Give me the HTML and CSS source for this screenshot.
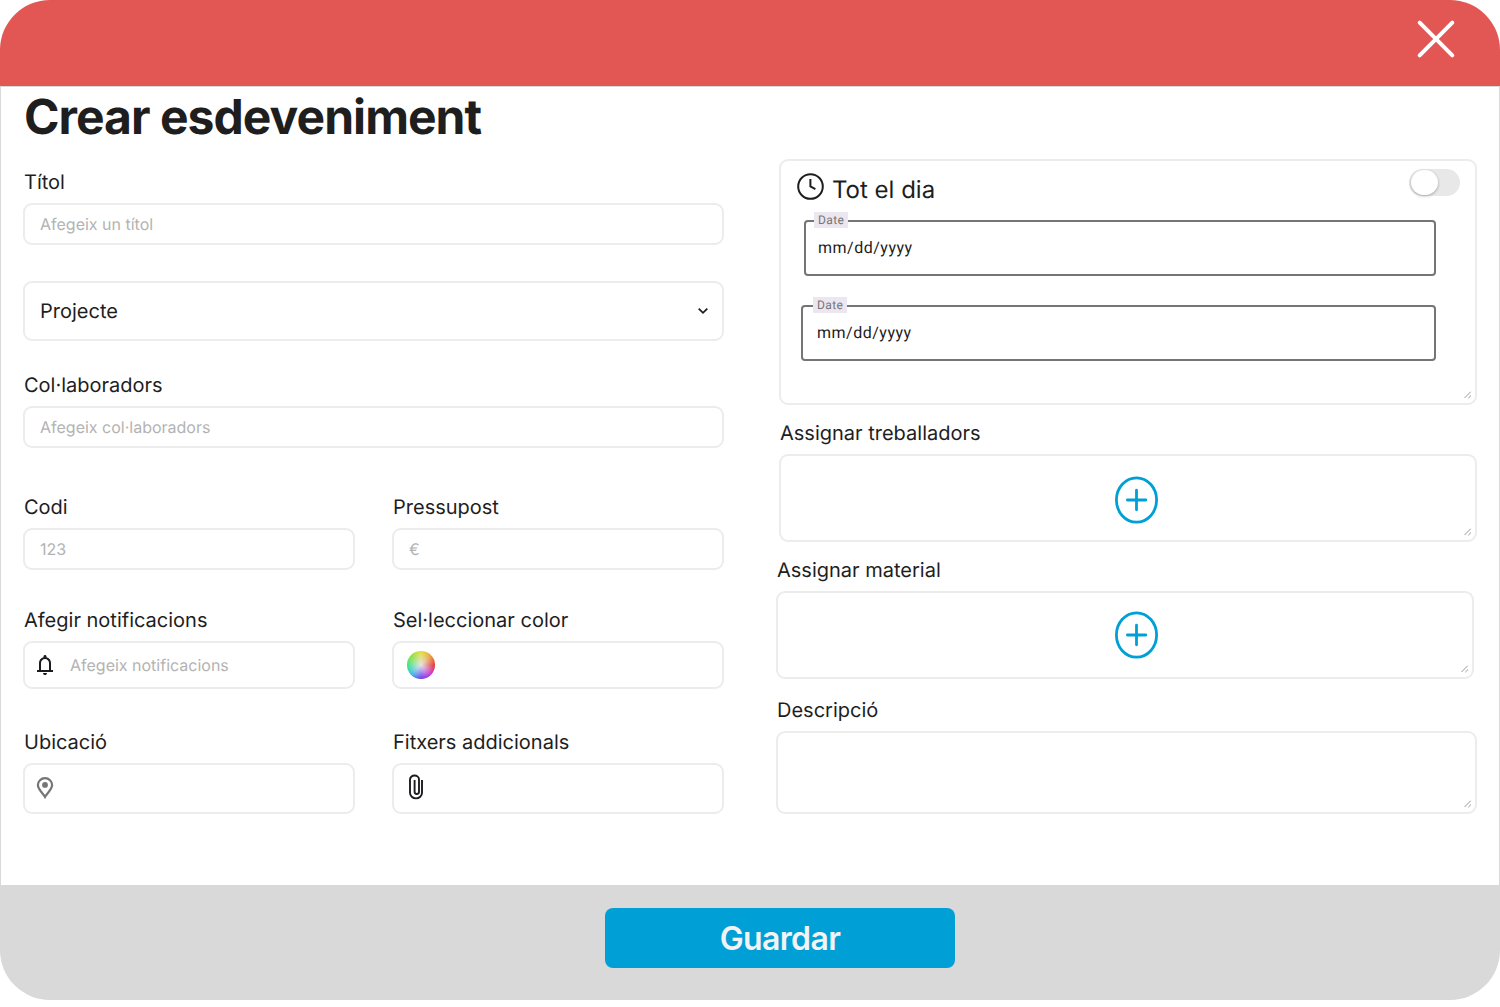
FILE: index.html
```html
<!DOCTYPE html>
<html lang="ca">
<head>
<meta charset="utf-8">
<title>Crear esdeveniment</title>
<link rel="stylesheet" href="styles.css">
</head>
<body>
<main class="modal">
  <header class="topbar">
    <svg class="close" width="40" height="40" viewBox="0 0 40 40"><path d="M3.700 3.700 36.300 36.300M36.300 3.700 3.700 36.300"/></svg>
  </header>
  <section class="content">
    <h1 class="title"><span>Crear esdeveniment</span></h1>
    <div class="columns">
      <form class="left">
        <div class="field gap-36">
          <label class="label"><span>Títol</span></label>
          <div class="box h-42"><span class="hint">Afegeix un títol</span></div>
        </div>
        <div class="box h-60 select gap-30">
          <span>Projecte</span>
          <svg width="12" height="8" viewBox="0 0 12 8"><path d="M1.700 1.600 6 5.800 10.300 1.600"/></svg>
        </div>
        <div class="field gap-45">
          <label class="label"><span>Col·laboradors</span></label>
          <div class="box h-42"><span class="hint">Afegeix col·laboradors</span></div>
        </div>
        <div class="pair gap-36">
          <div class="field">
            <label class="label"><span>Codi</span></label>
            <div class="box h-42"><span class="hint">123</span></div>
          </div>
          <div class="field">
            <label class="label"><span>Pressupost</span></label>
            <div class="box h-42"><span class="hint">€</span></div>
          </div>
        </div>
        <div class="pair gap-39">
          <div class="field">
            <label class="label"><span>Afegir notificacions</span></label>
            <div class="box h-48 with-icon">
              <svg class="bell" width="24" height="24" viewBox="0 0 24 24"><path d="M4 19v-2h2v-7c0-1.383.417-2.612 1.250-3.687C8.083 5.238 9.167 4.533 10.500 4.200v-.7c0-.417.146-.77.438-1.062C11.229 2.146 11.583 2 12 2s.77.146 1.063.438c.291.291.437.645.437 1.062v.7c1.333.333 2.417 1.038 3.250 2.113C17.583 7.388 18 8.617 18 10v7h2v2H4Zm8 3c-.55 0-1.020-.196-1.412-.587A1.926 1.926 0 0 1 10 20h4c0 .55-.196 1.020-.588 1.413A1.926 1.926 0 0 1 12 22Zm-4-5h8v-7c0-1.100-.392-2.042-1.175-2.825C14.042 6.392 13.100 6 12 6s-2.042.392-2.825 1.175C8.392 7.958 8 8.900 8 10v7Z"/></svg>
              <span class="hint">Afegeix notificacions</span>
            </div>
          </div>
          <div class="field">
            <label class="label"><span>Sel·leccionar color</span></label>
            <div class="box h-48 with-wheel"><span class="wheel"></span></div>
          </div>
        </div>
        <div class="pair">
          <div class="field">
            <label class="label"><span>Ubicació</span></label>
            <div class="box h-51 with-icon">
              <svg class="pin" width="24" height="24" viewBox="0 0 24 24"><path d="M12 21C9.800 16.900 4.900 13.600 4.900 9.100A7.100 6.900 0 0 1 19.100 9.100C19.100 13.600 14.200 16.900 12 21Z"/><circle cx="12" cy="8.900" r="2.900"/></svg>
            </div>
          </div>
          <div class="field">
            <label class="label"><span>Fitxers addicionals</span></label>
            <div class="box h-51 with-clip">
              <svg class="clip" width="16" height="26" viewBox="0 0 16 26"><path d="M14 6v12.700a6 5.700 0 0 1-12 0V5.500a4.500 4 0 0 1 9 0v12.300a2.200 2.200 0 0 1-4.400 0V6"/></svg>
            </div>
          </div>
        </div>
      </form>

      <div class="right">
        <div class="box panel">
          <div class="allday">
            <svg class="clock" width="28" height="28" viewBox="0 0 28 28"><circle cx="14.500" cy="14.500" r="12.300"/><path d="M14.400 7V14.500l5 2.600"/></svg>
            <span class="allday-text">Tot el dia</span>
            <span class="switch"><span class="knob"></span></span>
          </div>
          <div class="date"><span class="tag">Date</span><span>mm/dd/yyyy</span></div>
          <div class="date date-end"><span class="tag">Date</span><span>mm/dd/yyyy</span></div>
          <svg class="grip" width="8" height="8" viewBox="0 0 8 8"><path d="M.5 7 6.700.8M4.300 7.200 7 4.500"/></svg>
        </div>
        <div class="field workers">
          <label class="label"><span>Assignar treballadors</span></label>
          <div class="box h-88 add">
            <svg class="plus" width="44" height="48" viewBox="0 0 44 48"><ellipse cx="21.500" cy="24" rx="20.100" ry="22.200"/><path d="M21.500 14.200v19.600M12.400 24h18.400"/></svg>
            <svg class="grip" width="8" height="8" viewBox="0 0 8 8"><path d="M.5 7 6.700.8M4.300 7.200 7 4.500"/></svg>
          </div>
        </div>
        <div class="field material">
          <label class="label"><span>Assignar material</span></label>
          <div class="box h-88 add">
            <svg class="plus" width="44" height="48" viewBox="0 0 44 48"><ellipse cx="21.500" cy="24" rx="20.100" ry="22.200"/><path d="M21.500 14.200v19.600M12.400 24h18.400"/></svg>
            <svg class="grip" width="8" height="8" viewBox="0 0 8 8"><path d="M.5 7 6.700.8M4.300 7.200 7 4.500"/></svg>
          </div>
        </div>
        <div class="field description">
          <label class="label"><span>Descripció</span></label>
          <div class="box h-83">
            <svg class="grip" width="8" height="8" viewBox="0 0 8 8"><path d="M.5 7 6.700.8M4.300 7.200 7 4.500"/></svg>
          </div>
        </div>
      </div>
    </div>
  </section>
  <footer class="footer"><button class="save"><span>Guardar</span></button></footer>
</main>
</body>
</html>
```
FILE: styles.css
```css
* { box-sizing: border-box; }
body { margin: 0; background: #fff; font-family: Inter, "Liberation Sans", sans-serif; font-feature-settings: "locl" 0; text-rendering: geometricPrecision; color: #1e1e1e; }
svg { display: block; flex: none; fill: none; }

.modal { display: flex; flex-direction: column; width: 1500px; height: 1000px; border-radius: 50px; overflow: hidden; background: #fff; }
.topbar { height: 86px; flex: none; display: flex; justify-content: flex-end; padding: 19px 44px 0 0; background: #e25654; }
.close { stroke: #fff; stroke-width: 4; stroke-linecap: round; }
.content { flex: 1; padding: 0 22px; border: 1px solid #d9d9d9; border-bottom: 0; }
.title { margin: 0; height: 72px; padding-left: 1px; font-size: 48px; line-height: 60px; font-weight: 700; letter-spacing: -0.960px; white-space: nowrap; }

.columns { display: flex; justify-content: space-between; }
.left { width: 701px; padding-top: 9px; }
.right { width: 701px; }
.field { display: flex; flex-direction: column; gap: 7px; }
.pair { display: grid; grid-template-columns: 332px 332px; justify-content: space-between; }
.gap-30 { margin-bottom: 30px; }
.gap-36 { margin-bottom: 36px; }
.gap-39 { margin-bottom: 39px; }
.gap-45 { margin-bottom: 45px; }

.label { height: 28px; padding-left: 1px; font-size: 20px; line-height: 28px; white-space: nowrap; }
.box { position: relative; display: flex; align-items: center; padding: 0 15px; border: 2px solid #ececec; border-radius: 9px; background: #fff; white-space: nowrap; }
.hint { font-size: 16px; color: #b3b3b3; }
.h-42 { height: 42px; }
.h-48 { height: 48px; }
.h-51 { height: 51px; }
.h-60 { height: 60px; }
.h-83 { height: 83px; }
.h-88 { height: 88px; }

.select { justify-content: space-between; padding-right: 13px; font-size: 20px; }
.select svg { stroke: #1e1e1e; stroke-width: 1.800; }
.with-icon { gap: 13px; padding-left: 8px; }
.bell { fill: #1d1b20; }
.pin { margin-bottom: 2px; stroke: #757575; stroke-width: 2.200; }
.pin circle { fill: #757575; stroke: none; }
.with-wheel { padding-left: 13px; }
.wheel { width: 28px; height: 28px; border-radius: 50%; background: radial-gradient(circle, #e4e4e4 0%, rgba(228, 228, 228, 0) 70%), conic-gradient(from 90deg, #e83333, #c433d8 12.500%, #6b3cf0 25%, #3bb8ee 37.500%, #36e884 50%, #8ee03a 62.500%, #e4e038 75%, #eda034 87.500%, #e83333); }
.with-clip { padding-left: 14px; }
.clip { margin-bottom: 3px; stroke: #1d1b20; stroke-width: 1.900; }

.panel { display: block; width: 698px; height: 246px; margin: 0 0 14px 3px; padding: 8px 15px; }
.allday { display: flex; align-items: flex-start; height: 51px; }
.clock { margin-top: 3px; stroke: #1e1e1e; stroke-width: 2; }
.allday-text { margin-left: 8px; font-size: 24px; line-height: 42px; }
.switch { width: 51px; height: 27px; margin-left: auto; padding: 1px 2px; border-radius: 14px; background: #e8e8e8; }
.knob { display: block; width: 27px; height: 25px; border-radius: 12.500px; background: #fff; box-shadow: 0 1px 3px rgba(0, 0, 0, 0.300); }
.date { position: relative; display: flex; align-items: center; width: 632px; height: 56px; margin-left: 8px; padding: 0 0 2px 12px; border: 2px solid #757575; border-radius: 4px; font: 16px Roboto, sans-serif; letter-spacing: 0.500px; color: #1d1b20; }
.date-end { width: 635px; margin: 29px 0 0 5px; padding-left: 14px; }
.tag { position: absolute; left: 8px; top: -10px; height: 16px; padding: 0 4px; background: #ece6f0; font-size: 12px; line-height: 16px; letter-spacing: 0.400px; color: #757575; }
.date-end .tag { left: 10px; }
.grip { position: absolute; right: 3px; bottom: 4px; stroke: #999; stroke-width: 1; }

.workers { width: 698px; margin: 0 0 14px 3px; }
.material { width: 698px; margin-bottom: 17px; }
.add { justify-content: center; }
.plus { margin: 4px 0 0 17px; stroke: #00a0d6; stroke-width: 2.800; stroke-linecap: round; }
.material .plus { margin: 0 0 0 23px; }

.footer { height: 115px; flex: none; display: flex; padding: 23px 0 0 605px; background: #d9d9d9; }
.save { width: 350px; height: 60px; padding: 0; border: 0; border-radius: 8px; background: #00a0d6; font: 600 32px Inter, sans-serif; letter-spacing: -0.640px; color: #f3f3f3; }
```
